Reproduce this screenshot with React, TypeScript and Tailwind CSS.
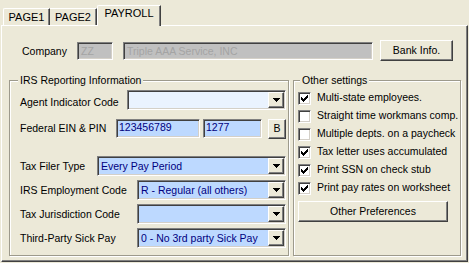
import React from "react";

const sunken =
  "border border-t-[#808080] border-l-[#808080] border-b-white border-r-white shadow-[inset_1px_1px_0_#404040,inset_-1px_-1px_0_#d4d0c8]";
const raised =
  "border border-t-white border-l-white border-b-[#404040] border-r-[#404040] shadow-[inset_-1px_-1px_0_#808080]";
const etched =
  "border border-[#9d9a8c] shadow-[inset_1px_1px_0_#ffffff,1px_1px_0_#ffffff]";

function Arrow() {
  return (
    <svg width="7" height="4" viewBox="0 0 7 4" shapeRendering="crispEdges">
      <polygon points="0,0 7,0 3.5,4" fill="#000" />
    </svg>
  );
}

function Combo({ width, value, light }: { width: string; value?: string; light?: boolean }) {
  return (
    <div className={`${width} h-[20px] flex p-[1px] ${sunken} ${light ? "bg-[#eaf3ff]" : "bg-[#bdd9ff]"}`}>
      <span className="flex-1 pl-[2px] leading-[16px] text-[#000080] whitespace-nowrap overflow-hidden">
        {value}
      </span>
      <span className={`w-[16px] h-[16px] flex items-center justify-center bg-[#ece9d8] ${raised}`}>
        <Arrow />
      </span>
    </div>
  );
}

function Check({ label, on }: { label: string; on?: boolean }) {
  return (
    <div className="h-[18px] flex items-center pl-[4px] gap-[6px]">
      <span className={`w-[13px] h-[13px] p-[2px] bg-white ${sunken}`}>
        {on && (
          <svg width="7" height="7" viewBox="0 0 7 7" shapeRendering="crispEdges" className="block">
            <path d="M0 2h1v1h1v1h1v-1h1v-1h1v-1h1v-1h1v3h-1v1h-1v1h-1v1h-1v1h-1v-1h-1v-1h-1z" fill="#000" />
          </svg>
        )}
      </span>
      <span className="whitespace-nowrap">{label}</span>
    </div>
  );
}

function Legend({ text }: { text: string }) {
  return (
    <span className="block w-fit -mt-[8px] h-[14px] leading-[14px] px-[2px] bg-[#ece9d8]">
      {text}
    </span>
  );
}

export default function App() {
  return (
    <div className="w-[469px] h-[263px] bg-[#ece9d8] px-[1px] font-['Liberation_Sans',Arial,sans-serif] text-[10.5px] text-black overflow-hidden">
      {/* tab strip */}
      <div className="h-[25px] flex items-end pl-[2px] text-[11px]">
        <div className="w-[47px] h-[17px] flex items-center justify-center border-t border-l border-white border-r border-r-[#404040] shadow-[inset_-1px_0_0_#808080] rounded-tl-[2px]">
          PAGE1
        </div>
        <div className="w-[47px] h-[17px] flex items-center justify-center border-t border-white border-r border-r-[#404040] shadow-[inset_-1px_0_0_#808080]">
          PAGE2
        </div>
        <div className="relative z-10 w-[64px] h-[21px] -mb-[1px] pb-[5px] flex items-center justify-center bg-[#ece9d8] border-t border-l border-white border-r border-r-[#404040] shadow-[inset_-1px_0_0_#808080] rounded-tl-[2px]">
          PAYROLL
        </div>
      </div>

      {/* panel */}
      <div className="w-[467px] h-[237px] border border-t-white border-l-white border-b-[#404040] border-r-[#404040] shadow-[inset_-1px_-1px_0_#808080]">
        <div className="mt-[14px] h-[21px] flex items-center pl-[20px]">
          <span className="w-[55px] pt-[3px]">Company</span>
          <div className={`w-[36px] h-[18px] pl-[3px] leading-[16px] bg-[#c0c0c0] text-[#a4a4a4] ${sunken}`}>ZZ</div>
          <div className={`ml-[10px] w-[250px] h-[18px] pl-[3px] leading-[16px] bg-[#c0c0c0] text-[#a4a4a4] ${sunken}`}>
            Triple AAA Service, INC
          </div>
          <button className={`ml-[7px] w-[73px] h-[21px] bg-[#ece9d8] ${raised}`}>Bank Info.</button>
        </div>

        <div className="mt-[19px] flex">
          {/* IRS Reporting Information */}
          <div className={`ml-[7px] w-[280px] h-[176px] ${etched}`}>
            <div className="ml-[8px]">
              <Legend text="IRS Reporting Information" />
            </div>
            <div className="mt-[3px] flex items-center pl-[10px]">
              <span className="w-[107px] pt-[5px]">Agent Indicator Code</span>
              <Combo width="w-[159px]" light />
            </div>
            <div className="mt-[8px] h-[20px] flex items-center pl-[10px]">
              <span className="w-[96px] pt-[1px]">Federal EIN &amp; PIN</span>
              <div className={`w-[84px] h-[19px] pl-[2px] leading-[15px] bg-[#bdd9ff] text-[#000080] ${sunken}`}>123456789</div>
              <div className={`ml-[3px] w-[59px] h-[19px] pl-[2px] leading-[15px] bg-[#bdd9ff] text-[#000080] ${sunken}`}>1277</div>
              <button className={`ml-[6px] w-[18px] h-[20px] bg-[#ece9d8] ${raised}`}>B</button>
            </div>
            <div className="mt-[17px] flex items-center pl-[10px]">
              <span className="w-[77px] pt-[3px]">Tax Filer Type</span>
              <Combo width="w-[189px]" value="Every Pay Period" />
            </div>
            <div className="mt-[4px] flex items-center pl-[10px]">
              <span className="w-[117px] pt-[2px]">IRS Employment Code</span>
              <Combo width="w-[149px]" value="R - Regular (all others)" />
            </div>
            <div className="mt-[4px] flex items-center pl-[10px]">
              <span className="w-[117px] pt-[2px]">Tax Jurisdiction Code</span>
              <Combo width="w-[149px]" />
            </div>
            <div className="mt-[4px] flex items-center pl-[10px]">
              <span className="w-[117px] pt-[3px]">Third-Party Sick Pay</span>
              <Combo width="w-[149px]" value="0 - No 3rd party Sick Pay" />
            </div>
          </div>

          {/* Other settings */}
          <div className={`ml-[4px] w-[168px] h-[176px] ${etched}`}>
            <div className="ml-[6px]">
              <Legend text="Other settings" />
            </div>
            <div className="mt-[2px]">
              <Check label="Multi-state employees." on />
              <Check label="Straight time workmans comp." />
              <Check label="Multiple depts. on a paycheck" />
              <Check label="Tax letter uses accumulated" on />
              <Check label="Print SSN on check stub" on />
              <Check label="Print pay rates on worksheet" on />
            </div>
            <button className={`mt-[4px] ml-[4px] w-[150px] h-[21px] bg-[#ece9d8] ${raised}`}>
              Other Preferences
            </button>
          </div>
        </div>
      </div>
    </div>
  );
}
